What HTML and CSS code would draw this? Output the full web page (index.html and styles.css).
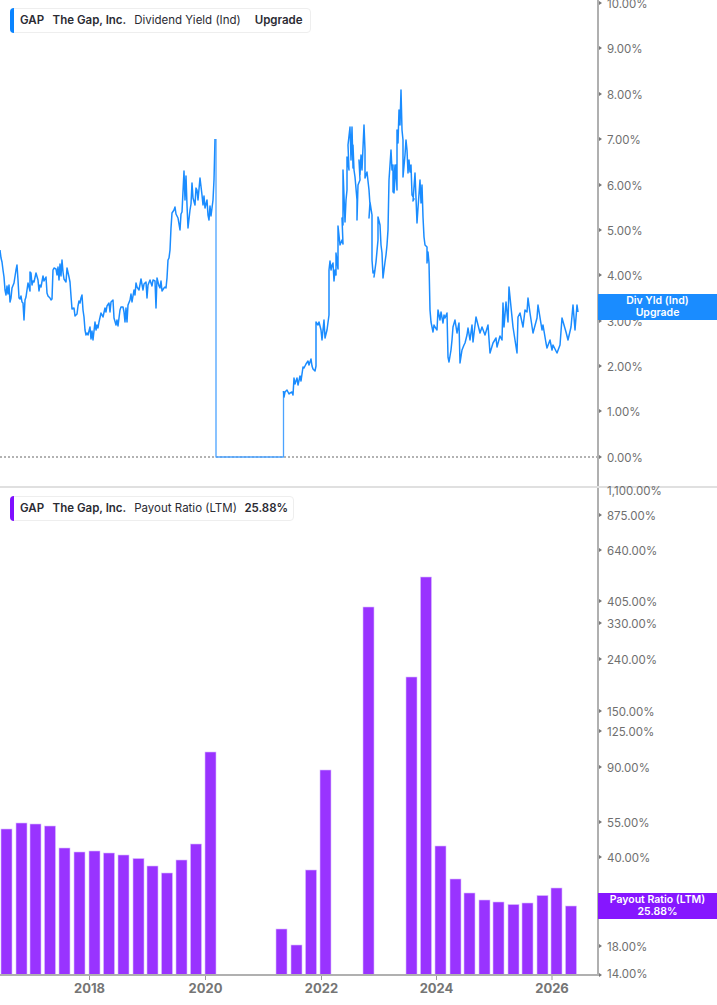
FILE: index.html
```html
<!DOCTYPE html>
<html lang="en">
<head>
<meta charset="utf-8">
<title>GAP Dividend Yield and Payout Ratio</title>
<link rel="stylesheet" href="styles.css">
</head>
<body>
<main class="charts">
  <section class="panel panel-yield">
    <svg class="plot" viewBox="0 0 717 486" width="717" height="486" aria-label="Dividend yield chart">
      <line class="zero" x1="0" y1="457" x2="597" y2="457"/>
      <path class="yield-line soft" d="M216 139V457H283.5V391"/>
      <path class="yield-line" d="M0 250 1 258 2 262 3 270 4 277 5 290 6 295 7 286 8 294 9 285 10 302 11 298 12 288 14 283 16 270 17 265 18 280 19 298 20 299 21 296 22 302 23 303 24 320 25 300 26 297 28 283 30 291 30 272 31 273 32 285 33 281 34 282 36 273 38 280 39 291 40 285 41 287 43 276 44 281 46 277 47 293 48 296 50 298 51 300 52 299 53 270 54 268 56 269 57 275 58 267 59 280 60 264 61 276 62 260 63 272 64 279 66 282 67 268 69 277 70 282 71 296 72 309 74 308 75 316 77 314 78 306 79 301 80 303 81 298 82 295 83 310 84 317 85 330 86 335 87 333 88 335 90 327 91 339 92 331 93 340 95 322 96 330 97 325 98 328 99 322 101 313 103 317 105 308 106 312 107 306 109 303 110 312 111 302 113 300 114 318 116 325 117 320 118 326 120 310 121 307 123 307 124 312 125 322 126 308 127 322 128 305 130 300 131 294 132 302 134 290 135 295 136 283 137 287 139 290 141 279 143 290 144 284 146 282 147 298 148 285 150 280 152 286 153 280 155 281 156 308 157 278 159 286 160 288 161 281 162 291 164 288 165 287 166 288 167 278 168 260 169 258 170 250 171 228 172 213 174 210 175 207 176 214 178 218 180 230 181 214 182 212 184 171 185 200 186 176 187 205 188 228 190 210 191 204 192 183 193 198 195 205 196 188 197 190 198 200 200 178 202 195 203 205 204 196 205 208 207 200 208 215 209 220 210 206 211 216 213 200 214 180 215 139"/>
      <path class="yield-line" d="M283.5 391 284 397 285 392 287 390 289 394 290 393 292 392 293 395 294 378 295 384 297 378 298 385 300 376 301 381 303 367 304 368 306 364 308 361 309 365 311 359 312 366 313 369 315 371 316 366 316 322 318 325 319 322 321 330 322 340 323 330 324 320 325 338 327 330 329 315 329 270 330 261 331 270 332 265 333 263 334 281 335 270 336 275 336 253 338 269 338 226 340 245 342 240 343 244 342 218 343 225 343 170 345 222 346 200 347 190 347 157 349 170 348 145 350 127 351 160 352 127 353 168 353 145 354 170 355 177 357 200 357 220 358 185 360 180 359 160 360 175 361 155 362 170 364 125 365 150 365 178 367 172 369 190 370 205 369 218 370 202 372 215 372 260 373 273 375 270 374 277 376 262 378 240 378 217 380 225 381 245 382 253 383 278 385 262 386 255 387 245 388 230 389 180 391 150 392 170 393 165 393 192 395 165 394 193 396 165 397 190 397 130 398 143 399 110 400 125 401 90 402 130 403 140 403 177 405 155 406 140 407 150 408 173 409 160 410 172 411 165 412 195 414 199 413 201 415 173 417 223 418 208 420 180 421 203 422 185 423 217 424 237 425 245 427 247 427 263 428 252 429 263 430 310 431 322 433 332 434 325 435 327 437 330 438 310 440 320 441 312 443 323 444 315 445 318 447 313 448 357 449 362 451 350 452 340 453 327 455 320 457 333 459 323 460 363 462 350 464 345 465 343 467 335 468 328 470 340 472 325 473 342 476 317 478 325 480 333 482 327 485 335 488 325 490 353 493 343 496 338 497 347 500 336 502 340 503 303 504 327 506 302 508 322 509 287 511 307 513 327 517 353 518 317 520 313 523 327 525 310 527 312 528 298 530 313 533 333 537 318 538 305 542 330 543 325 546 343 547 348 550 340 552 350 553 345 557 353 560 345 562 318 566 332 568 340 571 327 573 305 575 330 577 305 578 312"/>
      <line class="axis" x1="598" y1="0" x2="598" y2="486"/>
      <g class="ticks">
        <path d="M599 1l3 2-3 2zM599 46l3 2-3 2zM599 92l3 2-3 2zM599 137l3 2-3 2zM599 183l3 2-3 2zM599 228l3 2-3 2zM599 273l3 2-3 2zM599 319l3 2-3 2zM599 364l3 2-3 2zM599 409l3 2-3 2zM599 455l3 2-3 2z"/>
      </g>
      <g class="labels">
        <text x="607" y="7">10.00%</text>
        <text x="607" y="52">9.00%</text>
        <text x="607" y="98">8.00%</text>
        <text x="607" y="143">7.00%</text>
        <text x="607" y="189">6.00%</text>
        <text x="607" y="234">5.00%</text>
        <text x="607" y="279">4.00%</text>
        <text x="607" y="325">3.00%</text>
        <text x="607" y="370">2.00%</text>
        <text x="607" y="415">1.00%</text>
        <text x="607" y="461">0.00%</text>
      </g>
    </svg>
    <div class="legend legend-yield">
      <span class="legend-bar bar-blue"></span>
      <strong class="ticker">GAP</strong>
      <strong class="company">The Gap, Inc.</strong>
      <span class="metric">Dividend Yield (Ind)</span>
      <strong class="value value-wide">Upgrade</strong>
    </div>
    <div class="tag tag-blue">Div Yld (Ind)<br>Upgrade</div>
  </section>

  <section class="panel panel-payout">
    <svg class="plot" viewBox="0 488 717 517" width="717" height="517" aria-label="Payout ratio chart">
      <g class="bars">
        <rect x="1" y="829" width="11" height="146"/>
        <rect x="16" y="823" width="11" height="152"/>
        <rect x="30" y="824" width="11" height="151"/>
        <rect x="44.500" y="826" width="11" height="149"/>
        <rect x="59" y="848" width="11" height="127"/>
        <rect x="74" y="852" width="11" height="123"/>
        <rect x="89" y="851" width="11" height="124"/>
        <rect x="103.500" y="853" width="11" height="122"/>
        <rect x="118" y="855" width="11" height="120"/>
        <rect x="133" y="858.500" width="11" height="116.500"/>
        <rect x="147" y="866" width="11" height="109"/>
        <rect x="161.500" y="873" width="11" height="102"/>
        <rect x="176" y="860" width="11" height="115"/>
        <rect x="190.500" y="844" width="11" height="131"/>
        <rect x="205" y="752" width="11" height="223"/>
        <rect x="276" y="929" width="11" height="46"/>
        <rect x="291" y="945" width="11" height="30"/>
        <rect x="305.500" y="870" width="11" height="105"/>
        <rect x="320" y="770" width="11" height="205"/>
        <rect x="363" y="607" width="11" height="368"/>
        <rect x="406" y="677" width="11" height="298"/>
        <rect x="420.500" y="577" width="11" height="398"/>
        <rect x="435" y="846" width="11" height="129"/>
        <rect x="450" y="879" width="11" height="96"/>
        <rect x="464" y="893" width="11" height="82"/>
        <rect x="479" y="900" width="11" height="75"/>
        <rect x="493" y="902" width="11" height="73"/>
        <rect x="508" y="904.500" width="11" height="70.500"/>
        <rect x="522" y="903" width="11" height="72"/>
        <rect x="537" y="895.500" width="11" height="79.500"/>
        <rect x="551" y="888" width="11" height="87"/>
        <rect x="565.500" y="906" width="11" height="69"/>
      </g>
      <line class="axis" x1="598" y1="488" x2="598" y2="976"/>
      <line class="axis" x1="0" y1="975" x2="599" y2="975"/>
      <g class="ticks">
        <path d="M599 513l3 2-3 2zM599 548l3 2-3 2zM599 599l3 2-3 2zM599 621l3 2-3 2zM599 657l3 2-3 2zM599 709l3 2-3 2zM599 729l3 2-3 2zM599 765l3 2-3 2zM599 820l3 2-3 2zM599 855l3 2-3 2zM599 907l3 2-3 2zM599 944l3 2-3 2zM599 973l3 2-3 2z"/>
      </g>
      <g class="xticks">
        <line x1="89.500" y1="976" x2="89.500" y2="980"/>
        <line x1="205.500" y1="976" x2="205.500" y2="980"/>
        <line x1="321.500" y1="976" x2="321.500" y2="980"/>
        <line x1="436.500" y1="976" x2="436.500" y2="980"/>
        <line x1="552" y1="976" x2="552" y2="980"/>
      </g>
      <g class="labels">
        <text x="607" y="494">1,100.00%</text>
        <text x="607" y="519">875.00%</text>
        <text x="607" y="554">640.00%</text>
        <text x="607" y="605">405.00%</text>
        <text x="607" y="627">330.00%</text>
        <text x="607" y="663">240.00%</text>
        <text x="607" y="715">150.00%</text>
        <text x="607" y="735">125.00%</text>
        <text x="607" y="771">90.00%</text>
        <text x="607" y="826">55.00%</text>
        <text x="607" y="861">40.00%</text>
        <text x="607" y="913">25.00%</text>
        <text x="607" y="950">18.00%</text>
        <text x="607" y="977">14.00%</text>
      </g>
      <g class="years">
        <text x="89.500" y="993">2018</text>
        <text x="205.500" y="993">2020</text>
        <text x="321.500" y="993">2022</text>
        <text x="436.500" y="993">2024</text>
        <text x="552" y="993">2026</text>
      </g>
    </svg>
    <div class="legend legend-payout">
      <span class="legend-bar bar-purple"></span>
      <strong class="ticker">GAP</strong>
      <strong class="company">The Gap, Inc.</strong>
      <span class="metric">Payout Ratio (LTM)</span>
      <strong class="value">25.88%</strong>
    </div>
    <div class="tag tag-purple">Payout Ratio (LTM)<br>25.88%</div>
  </section>
</main>
</body>
</html>
```
FILE: styles.css
```css
html, body {
  margin: 0;
  padding: 0;
  background: #fff;
}
body {
  width: 717px;
  height: 1005px;
  overflow: hidden;
  font-family: Inter, "Liberation Sans", sans-serif;
}
.charts {
  display: flex;
  flex-direction: column;
}
.panel {
  position: relative;
  height: 486px;
}
.panel-payout {
  height: 517px;
  border-top: 2px solid #e0e0e0;
}
.plot {
  display: block;
  overflow: visible;
}
.axis {
  stroke: #b0b0b0;
  stroke-width: 2;
}
.zero {
  stroke: #666;
  stroke-width: 1;
  stroke-dasharray: 2 2;
}
.yield-line {
  fill: none;
  stroke: #1a8cff;
  stroke-width: 1.5;
  stroke-linejoin: round;
}
.soft {
  stroke: #4ba3ff;
  stroke-width: 1.3;
}
.ticks path {
  fill: #777;
}
.xticks line {
  stroke: #999;
  stroke-width: 1;
}
.labels {
  transform: translateY(0.5px);
}
.labels text {
  font-size: 11.5px;
  fill: #6f6f6f;
}
.years text {
  font-size: 13px;
  font-weight: 700;
  fill: #757575;
  text-anchor: middle;
}
.bars rect {
  fill: #9933ff;
  stroke: #d9bdff;
  stroke-width: 0.6;
}
.legend {
  position: absolute;
  left: 10px;
  height: 25px;
  box-sizing: border-box;
  display: flex;
  align-items: center;
  background: #fff;
  border: 1px solid #eeeeee;
  border-radius: 4px;
  padding-left: 9px;
  padding-bottom: 1px;
  font-size: 11.5px;
  line-height: 16px;
  color: #2b2b33;
  white-space: nowrap;
}
.legend-yield {
  top: 8px;
  width: 301px;
}
.legend-payout {
  top: 8px;
  width: 284px;
}
.legend-bar {
  position: absolute;
  left: -1px;
  top: -1px;
  bottom: -1px;
  width: 4px;
  border-radius: 4px 0 0 4px;
}
.bar-blue {
  background: #0a84ff;
}
.bar-purple {
  background: #7f0fff;
}
.ticker,
.company,
.value {
  font-weight: 600;
}
.ticker {
  margin-right: 8.5px;
}
.company {
  margin-right: 8px;
}
.metric {
  margin-right: 7.5px;
}
.value-wide {
  margin-left: 6.5px;
}
.tag {
  position: absolute;
  left: 598px;
  width: 119px;
  height: 26px;
  color: #fff;
  font-size: 10.5px;
  font-weight: 600;
  line-height: 12px;
  text-align: center;
  padding-top: 1px;
  box-sizing: border-box;
}
.tag-blue {
  top: 294px;
  background: #1a8cff;
}
.tag-purple {
  top: 405px;
  background: #8616ff;
}
```
